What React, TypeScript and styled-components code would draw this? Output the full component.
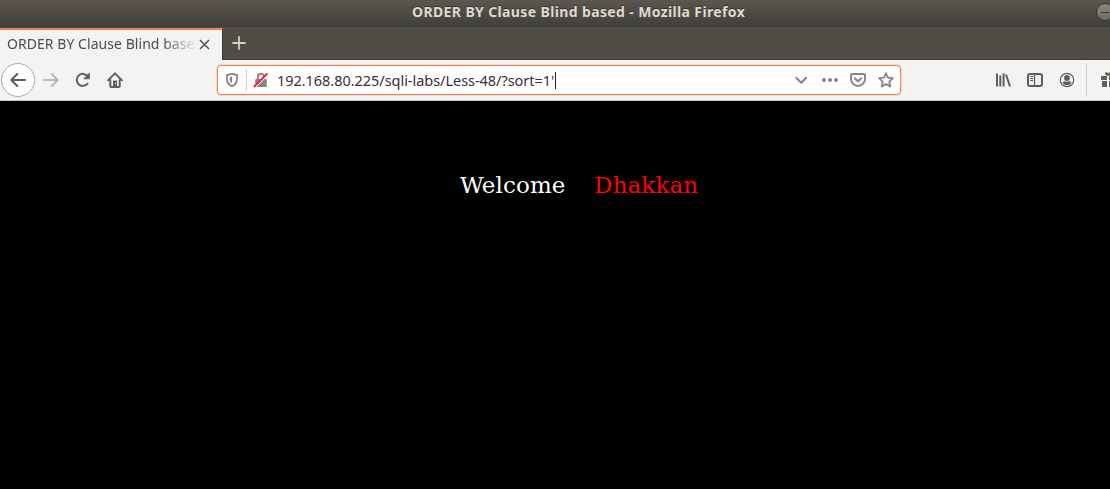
import React from "react";
import styled, { createGlobalStyle } from "styled-components";

const GlobalStyle = createGlobalStyle`
  *, *::before, *::after { box-sizing: border-box; }
  html, body { margin: 0; background: #000; overflow: hidden; }
`;

const Browser = styled.div`
  display: flex;
  flex-direction: column;
  width: 1110px;
  height: 489px;
  overflow: hidden;
  background: #000;
  font-family: "Noto Sans", "Open Sans", sans-serif;
`;

const TitleBar = styled.header`
  display: flex;
  flex: none;
  justify-content: space-between;
  align-items: flex-start;
  height: 27px;
  padding-left: 412px;
  background: linear-gradient(#5b574e, #403f3a);
  border-bottom: 1px solid #3d3b36;
`;

const WindowTitle = styled.h1`
  margin: 0;
  font-size: 14px;
  line-height: 23px;
  font-weight: 700;
  letter-spacing: 0.37px;
  color: #dfdbd2;
  text-shadow: 0 -1px 0 #33312c;
  white-space: nowrap;
`;

const MinimizeButton = styled.div`
  flex: none;
  width: 18px;
  height: 18px;
  margin: 3px -4px 0 0;
  padding: 8px 4px 0;
  border: 1px solid #383631;
  border-radius: 50%;
  background: linear-gradient(#8b8881, #6c6a64);

  &::after {
    content: "";
    display: block;
    height: 1px;
    background: #383631;
  }
`;

const TabStrip = styled.div`
  display: flex;
  flex: none;
  height: 33px;
  background: #504d46;
  border-bottom: 1px solid #3d3b36;
`;

const Tab = styled.div`
  display: flex;
  align-items: flex-start;
  flex: none;
  width: 223px;
  height: 33px;
  padding: 0 11px 0 7px;
  background: #f4f3f2;
  border-top: 2px solid #ee8159;
  border-right: 1px solid #3b3934;
  margin-top: 1px;
`;

const TabLabel = styled.span`
  width: 187px;
  overflow: hidden;
  white-space: nowrap;
  font-size: 14px;
  line-height: 27px;
  letter-spacing: 0.05px;
  color: #4c4c4c;
  mask-image: linear-gradient(to right, #000 155px, transparent 191px);
`;

const TabClose = styled.div`
  margin: 9px 0 0 5px;
`;

const NewTab = styled.div`
  padding: 9px 0 0 9px;
  height: 32px;
  color: #d1cec6;
`;

const NavBar = styled.nav`
  display: flex;
  flex: none;
  align-items: center;
  height: 41px;
  padding-left: 1px;
  background: #f4f3f2;
  border-bottom: 1px solid #cbc9c6;
  color: #5f5e5b;
`;

const BackButton = styled.div`
  display: grid;
  place-items: center;
  flex: none;
  width: 34px;
  height: 34px;
  border: 1px solid #adacaa;
  border-radius: 50%;
  background: #fff;
`;

const NavButton = styled.div<{ $gap: number; $faded?: boolean }>`
  display: flex;
  flex: none;
  margin-left: ${(p) => p.$gap}px;
  color: ${(p) => (p.$faded ? "#b9b8b5" : "inherit")};
`;

const AddressBar = styled.div`
  display: flex;
  align-items: center;
  flex: none;
  width: 684px;
  height: 30px;
  margin-left: 94px;
  padding: 0 6px;
  background: #fff;
  border: 1px solid #f07f53;
  border-radius: 4px;
  box-shadow: 0 0 0 0.5px #f07f5366;
  color: #858585;
`;

const Divider = styled.i<{ $height: number; $before: number; $after: number }>`
  flex: none;
  width: 1px;
  height: ${(p) => p.$height}px;
  margin: 0 ${(p) => p.$after}px 0 ${(p) => p.$before}px;
  background: #d3d1cf;
`;

const Url = styled.span`
  margin-left: 8px;
  font-size: 14.5px;
  line-height: 26px;
  letter-spacing: -0.04px;
  color: #333;
  white-space: nowrap;
`;

const Caret = styled.i`
  flex: none;
  width: 1px;
  height: 17px;
  margin-left: 1px;
  background: #222;
`;

const AddressActions = styled.div`
  display: flex;
  gap: 12px;
  margin-left: auto;
`;

const Page = styled.main`
  display: flex;
  gap: 28.5px;
  padding: 70px 0 0 460px;
  font-family: "DejaVu Serif", serif;
  font-size: 23px;
  line-height: 28px;
  letter-spacing: 0.1px;
  white-space: nowrap;
`;

const Word = styled.span<{ $color: string }>`
  color: ${(p) => p.$color};
`;

const Svg = styled.svg`
  display: block;
  flex: none;
  fill: none;
  stroke: currentColor;
  stroke-width: 2;
  stroke-linecap: round;
  stroke-linejoin: round;
`;

type IconProps = { children: React.ReactNode; size?: number };

const Icon = ({ children, size = 16 }: IconProps) => (
  <Svg width={size} height={size} viewBox={`0 0 ${size} ${size}`}>
    {children}
  </Svg>
);

const CloseIcon = () => (
  <Icon size={11}><path d="M1.5 1.5l8 8M9.5 1.5l-8 8" strokeWidth="1.7" stroke="#5a5956" /></Icon>
);
const PlusIcon = () => (
  <Icon size={14}><path d="M7 1v12M1 7h12" strokeWidth="1.8" /></Icon>
);
const BackIcon = () => <Icon><path d="M15 8H1.6M7.3 2L1.3 8l6 6" /></Icon>;
const ForwardIcon = () => <Icon><path d="M1 8h13.4M8.7 2l6 6-6 6" /></Icon>;
const ReloadIcon = () => (
  <Icon>
    <path d="M12.6 11.5A6 6 0 1 1 12.4 4" />
    <path d="M14.3 1.6v5.1H9.2z" fill="currentColor" strokeWidth="1" />
  </Icon>
);
const HomeIcon = () => (
  <Icon>
    <path d="M1 8.4L8 1.4l7 7" />
    <path d="M3.3 8v6.2a.8.8 0 0 0 .8.8h7.800a.8.8 0 0 0 .8-.8V8" />
    <path d="M6 8.500h4V15H6z" fill="currentColor" stroke="none" />
    <path d="M8 11h1v1H8z" fill="#f4f3f2" stroke="none" />
  </Icon>
);
const ShieldIcon = () => (
  <Icon>
    <path d="M8 1.8L13 3v4c0 3.3-1.7 5.8-5 7.3C4.7 12.8 3 10.3 3 7V3z" strokeWidth="1.8" />
    <path d="M8 4.6v6.7C6.4 10.2 5.7 8.9 5.7 7V5.2z" fill="currentColor" stroke="none" />
  </Icon>
);
const InsecureIcon = () => (
  <Icon>
    <path d="M4.9 7V4.8a3.1 3.1 0 0 1 6.2 0V7" />
    <path d="M3.500 7h9a1.300 1.300 0 0 1 1.300 1.300v5.400a1.300 1.300 0 0 1-1.300 1.300h-9a1.300 1.300 0 0 1-1.300-1.300V8.300A1.300 1.300 0 0 1 3.500 7z" fill="currentColor" stroke="none" />
    <path d="M2.200 15.300L14.800 2.700" stroke="#fff" strokeWidth="1.500" />
    <path d="M1.500 14.300L13.800 2" stroke="#ff1744" />
  </Icon>
);
const ChevronIcon = () => <Icon><path d="M2.2 5.700l5 5 5-5" /></Icon>;
const DotsIcon = () => (
  <Icon>
    <g fill="currentColor" stroke="none">
      <circle cx="2" cy="8" r="2" /><circle cx="8" cy="8" r="2" /><circle cx="14" cy="8" r="2" />
    </g>
  </Icon>
);
const PocketIcon = () => (
  <Icon>
    <path d="M2 2h12a1 1 0 0 1 1 1v4a7 7 0 0 1-14 0V3a1 1 0 0 1 1-1z" strokeWidth="1.9" />
    <path d="M4.7 6.3L8 9.3l3.3-3" />
  </Icon>
);
const StarIcon = () => (
  <Icon>
    <path d="M8 1.3l2 4.3 4.9.6-3.6 3.4 1 4.9L8 12.1l-4.3 2.400 1-4.900L1.100 6.200l4.900-.6z" strokeWidth="1.8" />
  </Icon>
);
const LibraryIcon = () => (
  <Icon><path d="M2 1.5v13M5.3 3.5v11M8.6 1.5v13M11 2.5l4 12" strokeLinecap="butt" /></Icon>
);
const SidebarIcon = () => (
  <Icon>
    <rect x="1" y="2" width="14" height="12" rx="2" />
    <path d="M7.5 2v12" strokeWidth="1.3" />
    <path d="M3 4.5h3M3 6.5h3M3 8.5h3" strokeWidth="1" strokeLinecap="butt" />
  </Icon>
);
const AccountIcon = () => (
  <Icon>
    <circle cx="8" cy="8" r="6.7" strokeWidth="1.2" />
    <circle cx="8" cy="6" r="2.9" fill="currentColor" stroke="none" />
    <path d="M3.4 10.4Q5 9.200 6 9.300q2 1 4 0 1-.1 2.600 1.100A5.300 5.300 0 0 1 3.400 10.400z" fill="currentColor" stroke="none" />
  </Icon>
);
const GiftIcon = () => (
  <Icon>
    <g fill="currentColor" stroke="none">
      <path d="M1 4h5v4H0V5a1 1 0 0 1 1-1zM8 4h5a1 1 0 0 1 1 1v3H8zM1 9h5v6H2a1 1 0 0 1-1-1zM8 9h5v5a1 1 0 0 1-1 1H8z" />
      <path d="M7 4C5 3.500 4 2.500 4 1.500 4 0 6 0 7 1.300 8 0 10 0 10 1.500 10 2.500 9 3.500 7 4z" />
    </g>
  </Icon>
);

export default function App() {
  return (
    <Browser>
      <GlobalStyle />
      <TitleBar>
        <WindowTitle>ORDER BY Clause Blind based - Mozilla Firefox</WindowTitle>
        <MinimizeButton />
      </TitleBar>
      <TabStrip>
        <Tab>
          <TabLabel>ORDER BY Clause Blind based</TabLabel>
          <TabClose><CloseIcon /></TabClose>
        </Tab>
        <NewTab><PlusIcon /></NewTab>
      </TabStrip>
      <NavBar>
        <BackButton><BackIcon /></BackButton>
        <NavButton $gap={8} $faded><ForwardIcon /></NavButton>
        <NavButton $gap={16}><ReloadIcon /></NavButton>
        <NavButton $gap={16}><HomeIcon /></NavButton>
        <AddressBar>
          <ShieldIcon />
          <Divider $height={22} $before={6} $after={6} />
          <InsecureIcon />
          <Url>192.168.80.225/sqli-labs/Less-48/?sort=1'</Url>
          <Caret />
          <AddressActions>
            <ChevronIcon />
            <DotsIcon />
            <PocketIcon />
            <StarIcon />
          </AddressActions>
        </AddressBar>
        <NavButton $gap={94}><LibraryIcon /></NavButton>
        <NavButton $gap={16}><SidebarIcon /></NavButton>
        <NavButton $gap={16}><AccountIcon /></NavButton>
        <Divider $height={34} $before={11} $after={14} />
        <GiftIcon />
      </NavBar>
      <Page>
        <Word $color="#fff">Welcome</Word>
        <Word $color="#f00">Dhakkan</Word>
      </Page>
    </Browser>
  );
}
